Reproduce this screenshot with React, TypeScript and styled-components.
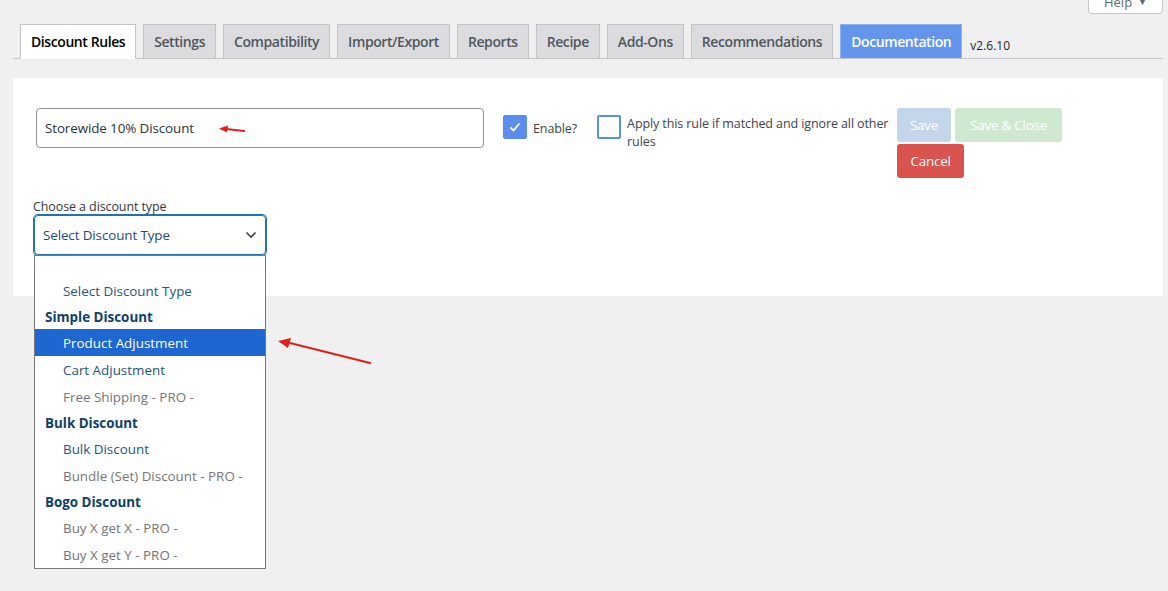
import React from "react";
import styled, { createGlobalStyle } from "styled-components";

const Global = createGlobalStyle`
  html, body { margin: 0; padding: 0; background: #f0f0f1; }
  body { font-family: "Open Sans", "Noto Sans", sans-serif; color: #3c434a; }
  * { box-sizing: border-box; }
`;

const Page = styled.div`
  position: relative;
  width: 1168px;
  height: 591px;
  overflow: hidden;
  padding: 0 5px 0 13px;
`;

const HelpButton = styled.div`
  position: absolute;
  right: 5px;
  top: -11px;
  width: 75px;
  height: 25px;
  background: #fff;
  border: 1px solid #c3c4c7;
  border-radius: 0 0 4px 4px;
  font-size: 13px;
  color: #646970;
  display: flex;
  align-items: center;
  justify-content: center;
  gap: 6px;
`;

const TabBar = styled.div`
  display: flex;
  align-items: flex-end;
  margin-top: 24px;
  padding-left: 7px;
  gap: 7px;
  border-bottom: 1px solid #c3c4c7;
  height: 35px;
`;

const Tab = styled.div<{ $active?: boolean; $doc?: boolean }>`
  padding: 0 10px;
  display: flex;
  align-items: center;
  font-size: 14px;
  font-weight: 600;
  letter-spacing: -0.42px;
  border: 1px solid ${(p) => (p.$doc ? "#8fb0ee" : "#c3c4c7")};
  border-bottom: ${(p) => (p.$active ? "1px solid #fff" : "none")};
  margin-bottom: ${(p) => (p.$active ? "-1px" : "0")};
  height: ${(p) => (p.$active ? "35px" : "34px")};
  background: ${(p) => (p.$active ? "#fff" : p.$doc ? "#6495ed" : "#dcdcde")};
  color: ${(p) => (p.$active ? "#000" : p.$doc ? "#fff" : "#50575e")};
`;

const Version = styled.div`
  font-size: 12px;
  color: #1d2327;
  align-self: center;
  margin-left: 1px;
  margin-top: 8px;
`;

const Panel = styled.div`
  margin-top: 19px;
  background: #fff;
  height: 218px;
  padding: 30px 23px 0 23px;
`;

const TopRow = styled.div`
  display: flex;
  align-items: flex-start;
`;

const NameInput = styled.div`
  width: 448px;
  height: 40px;
  border: 1px solid #8c8f94;
  border-radius: 4px;
  display: flex;
  align-items: center;
  padding-left: 8px;
  font-size: 13.4px;
  color: #2c3338;
  letter-spacing: -0.1px;
  position: relative;
`;

const CheckGroup = styled.div<{ $ml: number; $w?: number }>`
  display: flex;
  align-items: flex-start;
  margin-left: ${(p) => p.$ml}px;
  margin-top: 7px;
  gap: 6px;
  width: ${(p) => (p.$w ? `${p.$w}px` : "auto")};
  flex: none;
`;

const Box = styled.div<{ $checked?: boolean }>`
  flex: none;
  width: 24px;
  height: 24px;
  border-radius: 2px;
  background: ${(p) => (p.$checked ? "#5b8def" : "#fff")};
  border: 2px solid #5b8def;
  display: flex;
  align-items: center;
  justify-content: center;
`;

const CheckLabel = styled.div<{ $pt: number }>`
  font-size: 12.5px;
  line-height: 18px;
  color: #3c434a;
  padding-top: ${(p) => p.$pt}px;
  letter-spacing: -0.1px;
`;

const Buttons = styled.div`
  display: flex;
  flex-wrap: wrap;
  width: 170px;
  column-gap: 4px;
  row-gap: 2px;
  margin-left: 5px;
  flex: none;
`;

const Btn = styled.div<{ $bg: string; $w: number }>`
  height: 34px;
  width: ${(p) => p.$w}px;
  border-radius: 3px;
  background: ${(p) => p.$bg};
  color: #fff;
  font-size: 13.4px;
  display: flex;
  align-items: center;
  justify-content: center;
  letter-spacing: -0.2px;
`;

const FieldLabel = styled.div`
  margin-top: 21px;
  margin-left: -3px;
  font-size: 12.5px;
  color: #32373c;
  line-height: 16px;
  letter-spacing: -0.1px;
`;

const SelectWrap = styled.div`
  position: relative;
  margin-left: -2px;
  width: 232px;
`;

const SelectBox = styled.div`
  height: 40px;
  border: 1px solid #2271b1;
  box-shadow: 0 0 0 1px #2271b1;
  border-radius: 4px;
  display: flex;
  align-items: center;
  justify-content: space-between;
  padding: 0 8px 0 8px;
  font-size: 13.4px;
  color: #1d4c77;
  letter-spacing: -0.1px;
`;

const DropList = styled.div`
  position: absolute;
  left: 0;
  top: 40px;
  width: 232px;
  background: #fff;
  border: 1px solid #7a7a7a;
  padding-top: 21px;
  z-index: 2;
`;

const Row = styled.div<{ $kind: "item" | "header" | "pro" | "selected" }>`
  height: ${(p) => (p.$kind === "header" ? 25 : 27)}px;
  display: flex;
  align-items: center;
  padding-left: ${(p) => (p.$kind === "header" ? 10 : 28)}px;
  font-size: 13.4px;
  letter-spacing: 0;
  font-weight: ${(p) => (p.$kind === "header" ? 700 : 400)};
  background: ${(p) => (p.$kind === "selected" ? "#1e66d2" : "transparent")};
  color: ${(p) =>
    p.$kind === "selected"
      ? "#fff"
      : p.$kind === "header"
      ? "#0f3f6b"
      : p.$kind === "pro"
      ? "#757575"
      : "#245683"};
`;

const Arrow = styled.svg`
  position: absolute;
  pointer-events: none;
  overflow: visible;
`;

type Item = { label: string; kind: "item" | "header" | "pro" | "selected" };

const items: Item[] = [
  { label: "Select Discount Type", kind: "item" },
  { label: "Simple Discount", kind: "header" },
  { label: "Product Adjustment", kind: "selected" },
  { label: "Cart Adjustment", kind: "item" },
  { label: "Free Shipping - PRO -", kind: "pro" },
  { label: "Bulk Discount", kind: "header" },
  { label: "Bulk Discount", kind: "item" },
  { label: "Bundle (Set) Discount - PRO -", kind: "pro" },
  { label: "Bogo Discount", kind: "header" },
  { label: "Buy X get X - PRO -", kind: "pro" },
  { label: "Buy X get Y - PRO -", kind: "pro" },
];

const tabs = [
  "Settings",
  "Compatibility",
  "Import/Export",
  "Reports",
  "Recipe",
  "Add-Ons",
  "Recommendations",
];

export default function App() {
  return (
    <>
      <Global />
      <Page>
        <HelpButton>
          <span>Help</span>
          <span style={{ fontSize: 9 }}>▼</span>
        </HelpButton>
        <TabBar>
          <Tab $active>Discount Rules</Tab>
          {tabs.map((t) => (
            <Tab key={t}>{t}</Tab>
          ))}
          <Tab $doc>Documentation</Tab>
          <Version>v2.6.10</Version>
        </TabBar>
        <Panel>
          <TopRow>
            <NameInput>
              Storewide 10% Discount
              <Arrow width="30" height="10" style={{ left: 181, top: 17 }}>
                <path d="M26 5 L8 3" stroke="#e0201c" strokeWidth="2.2" strokeLinecap="round" />
                <path d="M1 2.5 L10 -0.5 L9 6.5 Z" fill="#e0201c" />
              </Arrow>
            </NameInput>
            <CheckGroup $ml={19}>
              <Box $checked>
                <svg width="14" height="14" viewBox="0 0 14 14">
                  <path d="M2.5 7.5 L5.5 10.5 L11.5 3.5" stroke="#fff" strokeWidth="1.8" fill="none" />
                </svg>
              </Box>
              <CheckLabel $pt={5}>Enable?</CheckLabel>
            </CheckGroup>
            <CheckGroup $ml={20} $w={295}>
              <Box />
              <CheckLabel $pt={0}>Apply this rule if matched and ignore all other rules</CheckLabel>
            </CheckGroup>
            <Buttons>
              <Btn $bg="#c3d6ea" $w={54}>Save</Btn>
              <Btn $bg="#cfe9d1" $w={107}>Save &amp; Close</Btn>
              <Btn $bg="#d9534f" $w={67}>Cancel</Btn>
            </Buttons>
          </TopRow>
          <FieldLabel>Choose a discount type</FieldLabel>
          <SelectWrap>
            <SelectBox>
              <span>Select Discount Type</span>
              <svg width="12" height="8" viewBox="0 0 12 8">
                <path d="M1.5 1.5 L6 6 L10.5 1.5" stroke="#3c434a" strokeWidth="1.6" fill="none" />
              </svg>
            </SelectBox>
            <DropList>
              {items.map((it, i) => (
                <Row key={i} $kind={it.kind}>
                  {it.label}
                </Row>
              ))}
            </DropList>
            <Arrow width="100" height="30" style={{ left: 244, top: 124 }}>
              <path d="M92 24 L12 4" stroke="#e0201c" strokeWidth="2.2" strokeLinecap="round" />
              <path d="M0 2 L13 -1 L10 9 Z" fill="#e0201c" />
            </Arrow>
          </SelectWrap>
        </Panel>
      </Page>
    </>
  );
}
